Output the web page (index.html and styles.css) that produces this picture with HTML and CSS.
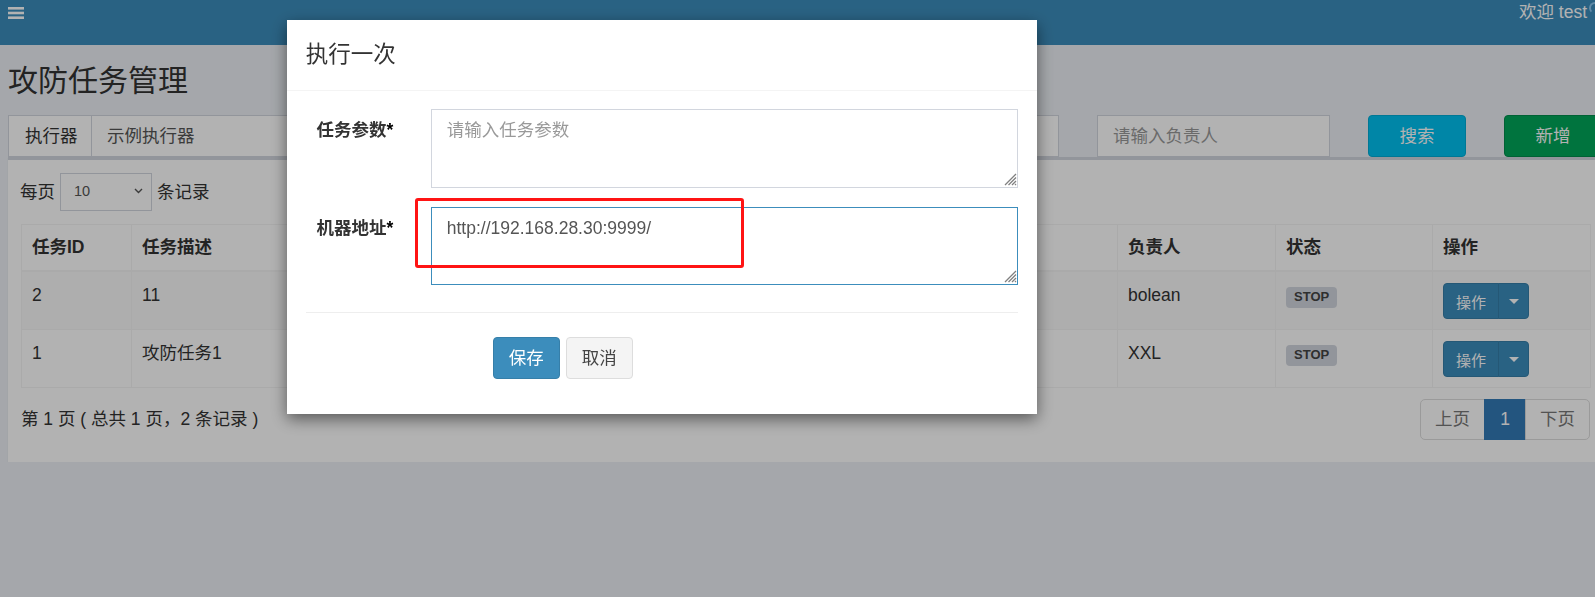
FILE: index.html
```html
<!DOCTYPE html>
<html lang="zh-CN">
<head>
  <meta charset="UTF-8">
  <title>攻防任务管理</title>
  <link rel="stylesheet" href="styles.css">
</head>
<body>
  <header class="main-header">
    <a class="sidebar-toggle">
      <svg width="16" height="12" viewBox="0 0 16 12"><rect x="0" y="0" width="16" height="2.6" fill="#fff"/><rect x="0" y="4.7" width="16" height="2.6" fill="#fff"/><rect x="0" y="9.4" width="16" height="2.6" fill="#fff"/></svg>
    </a>
    <div class="nav-user">欢迎 test<span class="user-arc"></span></div>
  </header>

  <div class="content">
    <h1 class="page-title">攻防任务管理</h1>

    <div class="search-row">
      <div class="input-group">
        <span class="addon">执行器</span>
        <div class="select-box">示例执行器</div>
      </div>
      <div class="text-input desc-input"></div>
      <div class="text-input author-input">请输入负责人</div>
      <button class="btn btn-search">搜索</button>
      <button class="btn btn-add">新增</button>
    </div>

    <div class="box">
      <div class="length-row">
        每页
        <div class="length-select">
          <span>10</span>
          <svg width="9" height="6" viewBox="0 0 9 6"><path d="M1 1 L4.5 4.5 L8 1" fill="none" stroke="#555" stroke-width="1.4"/></svg>
        </div>
        条记录
      </div>

      <table class="job-table">
        <colgroup>
          <col style="width: 110px">
          <col style="width: 330px">
          <col style="width: 328px">
          <col style="width: 328px">
          <col style="width: 158px">
          <col style="width: 157px">
          <col style="width: 158px">
        </colgroup>
        <thead>
          <tr>
            <th>任务ID</th>
            <th>任务描述</th>
            <th></th>
            <th></th>
            <th>负责人</th>
            <th>状态</th>
            <th>操作</th>
          </tr>
        </thead>
        <tbody>
          <tr class="odd">
            <td>2</td>
            <td>11</td>
            <td></td>
            <td></td>
            <td>bolean</td>
            <td><span class="label">STOP</span></td>
            <td>
              <div class="btn-group">
                <button class="btn-op">操作</button>
                <button class="btn-caret"><span class="caret"></span></button>
              </div>
            </td>
          </tr>
          <tr>
            <td>1</td>
            <td>攻防任务1</td>
            <td></td>
            <td></td>
            <td>XXL</td>
            <td><span class="label">STOP</span></td>
            <td>
              <div class="btn-group">
                <button class="btn-op">操作</button>
                <button class="btn-caret"><span class="caret"></span></button>
              </div>
            </td>
          </tr>
        </tbody>
      </table>

      <div class="pager-row">
        <div class="info">第 1 页 ( 总共 1 页，2 条记录 )</div>
        <ul class="pagination">
          <li>上页</li>
          <li class="active">1</li>
          <li>下页</li>
        </ul>
      </div>
    </div>
  </div>

  <div class="modal">
    <div class="modal-dialog">
      <div class="modal-header">
        <h4 class="modal-title">执行一次</h4>
      </div>
      <div class="modal-body">
        <div class="form-group">
          <label class="control-label">任务参数<b>*</b></label>
          <div class="control">
            <textarea class="form-control" placeholder="请输入任务参数"></textarea>
            <svg class="grip" width="13" height="13" viewBox="0 0 13 13"><path d="M12 1 L1 12 M12 4.5 L4.5 12 M12 8 L8 12 M12 11 L11 12" stroke="#808080" stroke-width="1.3"/></svg>
          </div>
        </div>
        <div class="form-group">
          <label class="control-label">机器地址<b>*</b></label>
          <div class="control">
            <textarea class="form-control focused">http://192.168.28.30:9999/</textarea>
            <svg class="grip" width="13" height="13" viewBox="0 0 13 13"><path d="M12 1 L1 12 M12 4.5 L4.5 12 M12 8 L8 12 M12 11 L11 12" stroke="#808080" stroke-width="1.3"/></svg>
          </div>
        </div>
        <hr>
        <div class="form-actions">
          <button class="btn-save">保存</button>
          <button class="btn-cancel">取消</button>
        </div>
      </div>
      <div class="highlight"></div>
    </div>
  </div>
</body>
</html>
```

FILE: styles.css
```css
body {
  margin: 0;
  font-family: "Liberation Sans", "Noto Sans CJK SC", sans-serif;
  font-size: 17.5px;
  line-height: 25px;
  color: #333;
  background-color: #ecf0f5;
  overflow: hidden;
}
.main-header {
  height: 45px;
  background-color: #3c8dbc;
  display: flex;
  justify-content: space-between;
  align-items: flex-start;
}
.sidebar-toggle {
  display: block;
  padding: 7px 8px;
  line-height: 0;
}
.nav-user {
  color: #fff;
  line-height: 25px;
  display: flex;
  align-items: flex-start;
  white-space: nowrap;
}
.user-arc {
  display: inline-block;
  width: 12px;
  height: 12px;
  margin: 2px -6px 0 2px;
  border: 2px solid transparent;
  border-top-color: #8cc8f0;
  border-left-color: #8cc8f0;
  border-radius: 50%;
  box-sizing: border-box;
}
.content {
  width: 1595px;
  padding: 0 8px;
  box-sizing: border-box;
}
.page-title {
  margin: 19px 0 18px;
  font-size: 30px;
  line-height: 33px;
  font-weight: normal;
}
.search-row {
  display: flex;
  gap: 38px;
  height: 42px;
}
.input-group {
  display: flex;
  width: 412px;
  flex-shrink: 0;
}
.addon, .select-box, .text-input {
  border: 1px solid #d2d6de;
  background: #fff;
  box-sizing: border-box;
  height: 42px;
  line-height: 40px;
  padding: 0 15px;
  white-space: nowrap;
}
.addon {
  width: 84px;
  padding: 0 15px 0 16px;
}
.select-box {
  flex: 1;
  border-left: none;
  color: #555;
}
.text-input {
  color: #999;
  flex-shrink: 0;
}
.desc-input {
  width: 601px;
}
.author-input {
  width: 233px;
}
.btn {
  width: 98px;
  height: 42px;
  flex-shrink: 0;
  border-radius: 4px;
  color: #fff;
  font: inherit;
  cursor: pointer;
}
.btn-search {
  background-color: #00c0ef;
  border: 1px solid #00acd6;
}
.btn-add {
  background-color: #00a65a;
  border: 1px solid #008d4c;
}
.box {
  width: 1595px;
  height: 305px;
  background: #fff;
  border-top: 3px solid #d2d6de;
  box-shadow: 0 1px 1px rgba(0, 0, 0, 0.1);
  padding: 13px;
  box-sizing: border-box;
}
.length-row {
  display: flex;
  align-items: center;
  gap: 5px;
  height: 38px;
  margin-left: -1px;
}
.length-select {
  width: 92px;
  height: 38px;
  box-sizing: border-box;
  border: 1px solid #d2d6de;
  display: flex;
  justify-content: space-between;
  align-items: center;
  padding: 0 8px 2px 13px;
  font-size: 14.5px;
  color: #555;
}
.job-table {
  margin-top: 13px;
  width: 1569px;
  table-layout: fixed;
  border-collapse: collapse;
  border: 1px solid #f4f4f4;
}
.job-table th, .job-table td {
  border: 1px solid #f4f4f4;
  padding: 10px;
  height: 25px;
  text-align: left;
  vertical-align: top;
  white-space: nowrap;
  overflow: hidden;
}
.job-table td {
  padding-top: 11px;
}
.job-table th {
  border-bottom: 2px solid #f4f4f4;
  font-weight: bold;
}
.job-table tr.odd td {
  background-color: #f9f9f9;
}
.label {
  display: inline-block;
  margin-top: 4px;
  padding: 3px 8px 5px;
  font-size: 13px;
  line-height: 13px;
  font-weight: bold;
  color: #444;
  background-color: #d2d6de;
  border-radius: 4px;
}
.btn-group {
  display: inline-flex;
  height: 36px;
}
.btn-op, .btn-caret {
  height: 36px;
  background-color: #3c8dbc;
  border: 1px solid #367fa9;
  color: #fff;
  font-family: inherit;
  font-size: 15px;
  cursor: pointer;
}
.btn-op {
  width: 56px;
  padding: 0;
  border-radius: 4px 0 0 4px;
}
.btn-caret {
  width: 31px;
  margin-left: -1px;
  padding: 0;
  border-radius: 0 4px 4px 0;
  display: flex;
  justify-content: center;
  align-items: center;
}
.caret {
  display: block;
  width: 0;
  height: 0;
  border-top: 5px solid #fff;
  border-left: 5px solid transparent;
  border-right: 5px solid transparent;
}
.pager-row {
  width: 1569px;
  margin-top: 11px;
  display: flex;
  justify-content: space-between;
  align-items: center;
}
.pagination {
  display: flex;
  list-style: none;
  margin: 0;
  padding: 0;
  height: 41px;
}
.pagination li {
  width: 65px;
  box-sizing: border-box;
  border: 1px solid #ddd;
  margin-left: -1px;
  line-height: 39px;
  text-align: center;
  color: #777;
  background: #fff;
}
.pagination li:first-child {
  border-radius: 5px 0 0 5px;
}
.pagination li:last-child {
  border-radius: 0 5px 5px 0;
}
.pagination li.active {
  width: 42px;
  background-color: #337ab7;
  border-color: #337ab7;
  color: #fff;
}
.modal {
  position: fixed;
  top: 0;
  left: 0;
  right: 0;
  bottom: 0;
  background-color: rgba(0, 0, 0, 0.3);
}
.modal-dialog {
  position: relative;
  width: 750px;
  margin: 20px 0 0 287px;
  background: #fff;
  box-shadow: 0 5px 15px rgba(0, 0, 0, 0.5);
}
.modal-header {
  padding: 18.75px;
  border-bottom: 1px solid #f4f4f4;
}
.modal-title {
  margin: 0;
  font-size: 22.5px;
  line-height: 32px;
  font-weight: normal;
}
.modal-body {
  padding: 18.75px 18.75px 18px;
}
.form-group {
  display: flex;
  margin: 0 -18.75px 18.75px;
}
.control-label {
  width: 125px;
  flex-shrink: 0;
  box-sizing: border-box;
  padding: 9px 18.75px 0;
  text-align: right;
  font-weight: bold;
  white-space: nowrap;
}
.control-label b {
  color: #000;
}
.control {
  flex: 1;
  padding: 0 18.75px;
  position: relative;
}
.form-control {
  display: block;
  width: 100%;
  height: 79px;
  box-sizing: border-box;
  border: 1px solid #d2d6de;
  border-radius: 0;
  padding: 7.5px 15px;
  font: inherit;
  line-height: 25px;
  color: #555;
  outline: none;
  margin: 0;
  resize: none;
}
.form-control::placeholder {
  color: #999;
}
.form-control.focused {
  height: 78px;
  border-color: #3c8dbc;
}
.grip {
  position: absolute;
  right: 20px;
  bottom: 2px;
}
.modal-body hr {
  margin: 27px 0 24px;
  border: 0;
  border-top: 1px solid #eee;
}
.form-actions {
  margin-left: 187px;
  padding-bottom: 17px;
  display: flex;
  gap: 6px;
}
.btn-save, .btn-cancel {
  height: 42px;
  padding: 0 15px;
  border-radius: 4px;
  font: inherit;
  cursor: pointer;
}
.btn-save {
  background-color: #3c8dbc;
  border: 1px solid #367fa9;
  color: #fff;
}
.btn-cancel {
  background-color: #f4f4f4;
  border: 1px solid #ddd;
  color: #444;
}
.highlight {
  position: absolute;
  left: 128px;
  top: 178px;
  width: 329px;
  height: 70px;
  border: 3px solid #ff1414;
  border-radius: 3px;
  box-sizing: border-box;
  pointer-events: none;
}
```
